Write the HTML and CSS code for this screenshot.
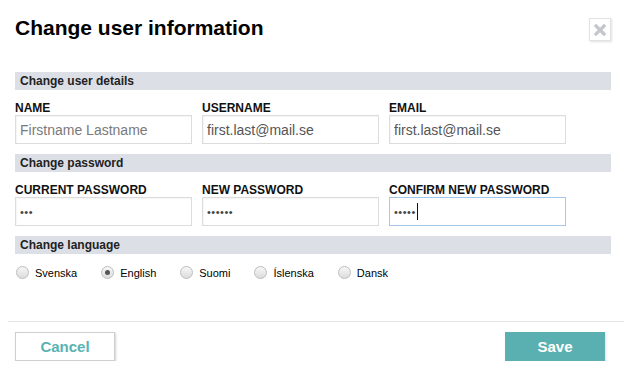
FILE: index.html
```html
<!DOCTYPE html>
<html lang="en">
<head>
<meta charset="utf-8">
<title>Change user information</title>
<link rel="stylesheet" href="styles.css">
</head>
<body>
<div class="dialog">
  <div class="header">
    <h1 class="title">Change user information</h1>
    <button class="close" type="button" aria-label="Close">
      <svg width="12" height="12" viewBox="0 0 12 12"><path d="M2 2 L10 10 M10 2 L2 10" stroke="#c3c6ca" stroke-width="3.2" stroke-linecap="square"/></svg>
    </button>
  </div>

  <div class="section-bar">Change user details</div>
  <div class="fields">
    <div class="field">
      <label class="label">NAME</label>
      <input class="input" type="text" placeholder="Firstname Lastname">
    </div>
    <div class="field">
      <label class="label">USERNAME</label>
      <input class="input" type="text" value="first.last@mail.se">
    </div>
    <div class="field">
      <label class="label">EMAIL</label>
      <input class="input" type="text" value="first.last@mail.se">
    </div>
  </div>

  <div class="section-bar">Change password</div>
  <div class="fields">
    <div class="field">
      <label class="label">CURRENT PASSWORD</label>
      <input class="input pw" type="password" value="abc">
    </div>
    <div class="field">
      <label class="label">NEW PASSWORD</label>
      <input class="input pw" type="password" value="abcdef">
    </div>
    <div class="field">
      <label class="label">CONFIRM NEW PASSWORD</label>
      <div class="input pw focused"><span>•••••</span><span class="caret"></span></div>
    </div>
  </div>

  <div class="section-bar">Change language</div>
  <div class="languages">
    <label class="lang"><span class="radio"></span>Svenska</label>
    <label class="lang"><span class="radio checked"></span>English</label>
    <label class="lang"><span class="radio"></span>Suomi</label>
    <label class="lang"><span class="radio"></span>Íslenska</label>
    <label class="lang"><span class="radio"></span>Dansk</label>
  </div>

  <div class="divider"></div>

  <div class="footer">
    <button class="btn btn-cancel" type="button">Cancel</button>
    <button class="btn btn-save" type="button">Save</button>
  </div>
</div>
</body>
</html>
```

FILE: styles.css
```css
* { box-sizing: border-box; }

body {
  margin: 0;
  background: #fff;
  font-family: "Liberation Sans", Arial, Helvetica, sans-serif;
  color: #111;
}

.dialog {
  padding: 0 13px 0 15px;
}

.header {
  display: flex;
  justify-content: space-between;
  align-items: flex-start;
  height: 72px;
  padding-top: 16px;
}

.title {
  margin: 0;
  font-size: 21px;
  line-height: 24px;
  font-weight: bold;
  color: #000;
}

.close {
  width: 22px;
  height: 23px;
  margin-top: 2px;
  padding: 0;
  border: 1px solid #e2e2e2;
  background: #fff;
  box-shadow: 1px 1px 2px rgba(0,0,0,0.12);
  display: flex;
  align-items: center;
  justify-content: center;
}

.section-bar {
  height: 18px;
  line-height: 18px;
  padding-left: 5px;
  background: #dcdfe6;
  font-size: 12px;
  font-weight: bold;
  color: #222;
}

.fields {
  display: grid;
  grid-template-columns: repeat(3, 177px);
  column-gap: 10px;
  padding: 11px 0 10px;
}

.label {
  display: block;
  font-size: 12px;
  line-height: 14px;
  font-weight: bold;
  color: #111;
}

.input {
  display: block;
  width: 177px;
  height: 29px;
  margin: 0;
  padding: 0 4px;
  border: 1px solid #dcdcdc;
  box-shadow: inset 1px 1px 1px rgba(0,0,0,0.04);
  font-family: "Liberation Sans", Arial, Helvetica, sans-serif;
  font-size: 14px;
  color: #555;
  background: #fff;
  outline: none;
}

.input::placeholder {
  color: #7a7a7a;
  opacity: 1;
}

.pw {
  font-size: 11px;
  color: #444;
  letter-spacing: 0.5px;
}

.input.focused {
  display: flex;
  align-items: center;
  border: 1px solid #a3c8ec;
  box-shadow: none;
}

.caret {
  width: 1px;
  height: 17px;
  background: #111;
  margin-left: 1px;
}

.languages {
  display: flex;
  gap: 24px;
  padding: 12px 0 0 1px;
  height: 67px;
}

.lang {
  display: flex;
  align-items: center;
  height: 13px;
  font-size: 11px;
  color: #000;
}

.radio {
  width: 13px;
  height: 13px;
  border-radius: 50%;
  border: 1px solid #bdbdbd;
  background: linear-gradient(#f7f7f7, #dcdcdc);
  margin-right: 6px;
  position: relative;
}

.radio.checked::after {
  content: "";
  position: absolute;
  left: 3px;
  top: 3px;
  width: 5px;
  height: 5px;
  border-radius: 50%;
  background: #555;
}

.divider {
  height: 1px;
  background: #e6e6e6;
  margin: 0 -13px 0 -7px;
}

.footer {
  display: flex;
  justify-content: space-between;
  padding: 10px 6px 0 0;
}

.btn {
  width: 100px;
  height: 29px;
  font-family: "Liberation Sans", Arial, Helvetica, sans-serif;
  font-size: 15px;
  font-weight: bold;
  padding: 0;
}

.btn-cancel {
  background: #fff;
  color: #5ab3b3;
  border: 1px solid #cfcfcf;
  box-shadow: 1px 1px 2px rgba(0,0,0,0.18);
}

.btn-save {
  background: #5ab0b0;
  color: #fff;
  border: none;
  box-shadow: 1px 1px 2px rgba(0,0,0,0.12);
}
```
